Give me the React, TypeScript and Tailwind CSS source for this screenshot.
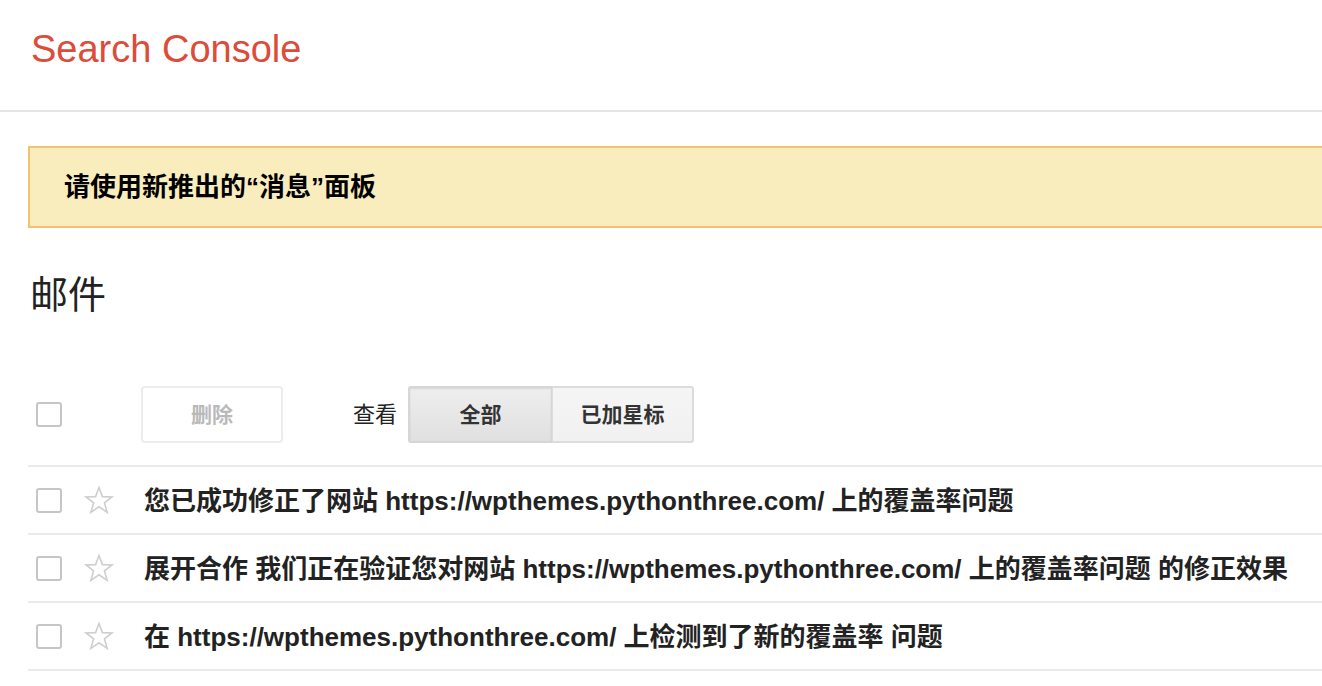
import React from 'react';

const font = 'font-["Liberation_Sans","Noto_Sans_CJK_SC",sans-serif]';

const messages = [
  '您已成功修正了网站 https://wpthemes.pythonthree.com/ 上的覆盖率问题',
  '展开合作 我们正在验证您对网站 https://wpthemes.pythonthree.com/ 上的覆盖率问题 的修正效果',
  '在 https://wpthemes.pythonthree.com/ 上检测到了新的覆盖率 问题',
];

// Small square checkbox used in the toolbar and in each row
const Box = () => (
  <span className="block w-[26px] h-[25px] rounded-[3px] border-2 border-[#c6c6c6] bg-white" />
);

const Star = () => (
  <svg width="32" height="31" viewBox="0 0 32 31" fill="none">
    <path
      d="M16 2.5 L19.4 11.6 L29 11.9 L21.4 17.8 L24.1 27.3 L16 21.8 L7.9 27.3 L10.6 17.8 L3 11.9 L12.6 11.6 Z"
      stroke="#cfcfcf"
      strokeWidth="1.6"
      strokeLinejoin="miter"
    />
  </svg>
);

export default function App() {
  return (
    <div className={`${font} w-[1322px] h-[686px] overflow-hidden bg-white text-[#222]`}>
      {/* Header */}
      <header className="h-[112px] flex items-center pl-[31px] pb-[12px] border-b-2 border-[#e5e5e5]">
        <span className="text-[38px] leading-none text-[#dd4b39] font-['Liberation_Sans',sans-serif]">
          Search Console
        </span>
      </header>

      <main className="pl-[28px]">
        {/* Notice banner */}
        <div className="mt-[34px] h-[82px] border-2 border-[#f0c36d] bg-[#f9edbe] flex items-center pl-[34px] -mr-[4px]">
          <span className="text-[26px] font-bold text-black">请使用新推出的“消息”面板</span>
        </div>

        <h1 className="mt-[48px] pl-[2px] text-[38px] leading-none font-normal text-[#222]">邮件</h1>

        {/* Toolbar */}
        <div className="mt-[72px] flex items-center h-[57px]">
          <div className="pl-[8px] w-[113px]">
            <Box />
          </div>
          <button className="w-[142px] h-[57px] rounded-[4px] border-2 border-[#ececec] bg-white text-[21px] font-bold text-[#b9b9b9]">
            删除
          </button>
          <span className="ml-[70px] w-[55px] text-[22px] text-[#222]">查看</span>
          <div className="flex h-[57px]">
            <button className="w-[144px] h-full rounded-l-[3px] border-2 border-r border-[#d6d6d6] bg-[linear-gradient(#eeeeee,#e0e0e0)] shadow-[inset_0_1px_2px_rgba(0,0,0,0.1)] text-[21px] font-bold text-[#333]">
              全部
            </button>
            <button className="w-[142px] h-full rounded-r-[3px] border-2 border-l border-[#dcdcdc] bg-[linear-gradient(#f5f5f5,#f1f1f1)] text-[21px] font-bold text-[#333]">
              已加星标
            </button>
          </div>
        </div>

        {/* Message list */}
        <ul className="mt-[22px] border-t-2 border-[#ebebeb]">
          {messages.map((m) => (
            <li key={m} className="h-[68px] flex items-center border-b-2 border-[#ebebeb]">
              <div className="pl-[8px] w-[55px]">
                <Box />
              </div>
              <div className="w-[61px]">
                <Star />
              </div>
              <span className="pt-[2px] text-[26px] font-bold text-[#222] whitespace-nowrap">{m}</span>
            </li>
          ))}
        </ul>
      </main>
    </div>
  );
}
